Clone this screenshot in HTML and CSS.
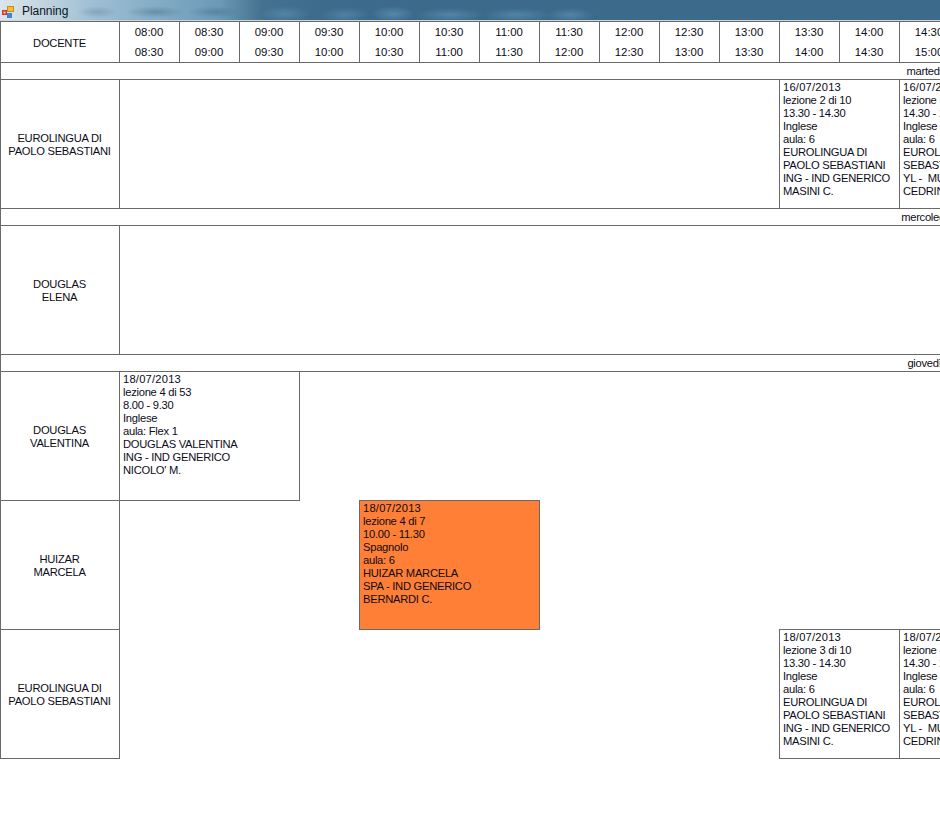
FILE: index.html
```html
<!DOCTYPE html>
<html lang="it">
    <head>
        <title>Planning</title>
        <link rel="stylesheet" href="styles.css">
    </head>
    <body>
        <header class="titlebar">
            <svg class="app-icon" width="12" height="12" viewBox="0 0 12 12">
                <rect x="0" y="4" width="5" height="5" fill="#d9342b"/>
                <rect x="1.5" y="5.5" width="2" height="2" fill="#f6d4cc"/>
                <rect x="5" y="0" width="7" height="6" fill="#f6bd2e"/>
                <rect x="5.5" y="0.5" width="6" height="5" fill="none" stroke="#c58f1c"/>
                <rect x="5" y="7" width="5" height="5" fill="#3b86d6"/>
            </svg>
            <span class="title">Planning</span>
        </header>
        <main class="planning">
            <div class="row head">
                <div class="teacher">DOCENTE</div>
                <div class="slot"><span>08:00</span><span>08:30</span></div>
                <div class="slot"><span>08:30</span><span>09:00</span></div>
                <div class="slot"><span>09:00</span><span>09:30</span></div>
                <div class="slot"><span>09:30</span><span>10:00</span></div>
                <div class="slot"><span>10:00</span><span>10:30</span></div>
                <div class="slot"><span>10:30</span><span>11:00</span></div>
                <div class="slot"><span>11:00</span><span>11:30</span></div>
                <div class="slot"><span>11:30</span><span>12:00</span></div>
                <div class="slot"><span>12:00</span><span>12:30</span></div>
                <div class="slot"><span>12:30</span><span>13:00</span></div>
                <div class="slot"><span>13:00</span><span>13:30</span></div>
                <div class="slot"><span>13:30</span><span>14:00</span></div>
                <div class="slot"><span>14:00</span><span>14:30</span></div>
                <div class="slot"><span>14:30</span><span>15:00</span></div>
            </div>

            <div class="day">martedì</div>
            <div class="row">
                <div class="teacher">EUROLINGUA DI<br>PAOLO SEBASTIANI</div>
                <div class="empty span11"></div>
                <div class="lesson span2">
                    <p class="date">16/07/2013</p>
                    <p>lezione 2 di 10</p>
                    <p>13.30 - 14.30</p>
                    <p>Inglese</p>
                    <p>aula: 6</p>
                    <p>EUROLINGUA DI</p>
                    <p>PAOLO SEBASTIANI</p>
                    <p>ING - IND GENERICO</p>
                    <p>MASINI C.</p>
                </div>
                <div class="lesson span3">
                    <p class="date">16/07/2013</p>
                    <p>lezione 3 di 10</p>
                    <p>14.30 - 16.00</p>
                    <p>Inglese</p>
                    <p>aula: 6</p>
                    <p>EUROLINGUA DI PAOLO</p>
                    <p>SEBASTIANI</p>
                    <p>YL -  MULTI</p>
                    <p>CEDRINI</p>
                </div>
            </div>

            <div class="day">mercoledì</div>
            <div class="row">
                <div class="teacher">DOUGLAS<br>ELENA</div>
                <div class="empty span29"></div>
            </div>

            <div class="day">giovedì</div>
            <div class="row">
                <div class="teacher">DOUGLAS<br>VALENTINA</div>
                <div class="lesson span3">
                    <p class="date">18/07/2013</p>
                    <p>lezione 4 di 53</p>
                    <p>8.00 - 9.30</p>
                    <p>Inglese</p>
                    <p>aula: Flex 1</p>
                    <p>DOUGLAS VALENTINA</p>
                    <p>ING - IND GENERICO</p>
                    <p>NICOLO' M.</p>
                </div>
            </div>
            <div class="row">
                <div class="teacher">HUIZAR<br>MARCELA</div>
                <div class="gap span4"></div>
                <div class="lesson span3 current">
                    <p class="date">18/07/2013</p>
                    <p>lezione 4 di 7</p>
                    <p>10.00 - 11.30</p>
                    <p>Spagnolo</p>
                    <p>aula: 6</p>
                    <p>HUIZAR MARCELA</p>
                    <p>SPA - IND GENERICO</p>
                    <p>BERNARDI C.</p>
                </div>
            </div>
            <div class="row">
                <div class="teacher">EUROLINGUA DI<br>PAOLO SEBASTIANI</div>
                <div class="gap span11"></div>
                <div class="lesson span2">
                    <p class="date">18/07/2013</p>
                    <p>lezione 3 di 10</p>
                    <p>13.30 - 14.30</p>
                    <p>Inglese</p>
                    <p>aula: 6</p>
                    <p>EUROLINGUA DI</p>
                    <p>PAOLO SEBASTIANI</p>
                    <p>ING - IND GENERICO</p>
                    <p>MASINI C.</p>
                </div>
                <div class="lesson span3">
                    <p class="date">18/07/2013</p>
                    <p>lezione 4 di 10</p>
                    <p>14.30 - 16.00</p>
                    <p>Inglese</p>
                    <p>aula: 6</p>
                    <p>EUROLINGUA DI PAOLO</p>
                    <p>SEBASTIANI</p>
                    <p>YL -  MULTI</p>
                    <p>CEDRINI</p>
                </div>
            </div>
        </main>
    </body>
</html>
```

FILE: styles.css
```css
html, body {
    margin: 0;
    padding: 0;
    height: 100%;
    overflow: hidden;
    background-color: white;
}

body {
    font-family: "Liberation Sans", Arial, sans-serif;
    font-size: 11.2px;
    line-height: 13px;
    letter-spacing: -0.27px;
    color: #0c0c18;
}

p {
    margin: 0;
    white-space: pre;
}

.date {
    letter-spacing: 0.2px;
}

.titlebar {
    display: flex;
    align-items: center;
    gap: 8px;
    box-sizing: border-box;
    height: 21px;
    padding: 2px 0 0 2px;
    border-bottom: 1px solid #ccd5da;
    background:
        radial-gradient(ellipse 20px 6px at 97px 12px, rgba(70, 110, 140, 0.3), transparent),
        radial-gradient(ellipse 30px 6px at 155px 12px, rgba(50, 90, 120, 0.35), transparent),
        radial-gradient(ellipse 26px 6px at 214px 12px, rgba(50, 90, 120, 0.35), transparent),
        radial-gradient(ellipse 25px 8px at 285px 14px, rgba(110, 165, 200, 0.4), transparent),
        radial-gradient(ellipse 24px 8px at 345px 15px, rgba(110, 165, 200, 0.4), transparent),
        radial-gradient(ellipse 22px 8px at 393px 14px, rgba(110, 165, 200, 0.5), transparent),
        radial-gradient(ellipse 34px 7px at 450px 15px, rgba(110, 165, 200, 0.45), transparent),
        radial-gradient(ellipse 34px 7px at 517px 15px, rgba(110, 165, 200, 0.45), transparent),
        radial-gradient(ellipse 24px 7px at 570px 15px, rgba(110, 165, 200, 0.45), transparent),
        linear-gradient(90deg, #dbe5eb 0, #c4d6e1 40px, #a0c0d4 90px, #7ea8c3 170px, #6b9ab6 220px, #43718f 262px, #3c6a8a 340px, #3c6a8a 940px);
}

.title {
    font-size: 12px;
    letter-spacing: -0.05px;
    color: #0b1420;
}

.planning {
    width: 1860px;
}

.row, .day {
    box-sizing: border-box;
    border-left: 1px solid #696969;
}

.row {
    display: grid;
    grid-template-columns: 119px repeat(29, 60px);
    height: 129px;
}

.head {
    height: 42px;
    border-top: 1px solid #696969;
    border-bottom: 1px solid #696969;
}

.day {
    height: 17px;
    padding-top: 2px;
    padding-right: 12px;
    border-bottom: 1px solid #696969;
    text-align: center;
}

.teacher {
    display: flex;
    align-items: center;
    justify-content: center;
    box-sizing: border-box;
    padding: 2px 1px 0 0;
    border-right: 1px solid #696969;
    border-bottom: 1px solid #696969;
    text-align: center;
}

.head .teacher {
    border-bottom: 0;
}

.slot {
    display: flex;
    flex-direction: column;
    align-items: center;
    gap: 7px;
    box-sizing: border-box;
    padding: 4px 1px 0 0;
    border-right: 1px solid #696969;
    font-size: 11.4px;
    letter-spacing: 0;
}

.empty {
    border-bottom: 1px solid #696969;
}

.lesson {
    box-sizing: border-box;
    margin: -1px 0 0 -1px;
    padding: 1px 3px;
    border: 1px solid #696969;
    overflow: hidden;
}

.current {
    background-color: #ff7f36;
}

.span2 { grid-column: span 2; }
.span3 { grid-column: span 3; }
.span4 { grid-column: span 4; }
.span11 { grid-column: span 11; }
.span29 { grid-column: span 29; }

.app-icon {
    flex-shrink: 0;
    margin-top: 1px;
}
```
